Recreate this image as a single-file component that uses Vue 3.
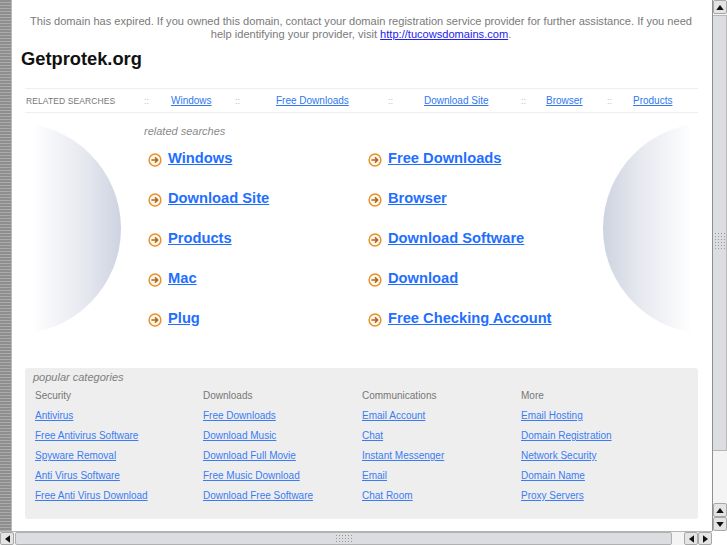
<script setup>
const barItems = [
  { label: 'Windows', w: 64, sep: 41 },
  { label: 'Free Downloads', w: 112, sep: 36 },
  { label: 'Download Site', w: 97, sep: 25 },
  { label: 'Browser', w: 61, sep: 26 },
  { label: 'Products', w: 60, sep: 0 },
]
const heroCols = [
  ['Windows', 'Download Site', 'Products', 'Mac', 'Plug'],
  ['Free Downloads', 'Browser', 'Download Software', 'Download', 'Free Checking Account'],
]
const categories = [
  { title: 'Security', links: ['Antivirus', 'Free Antivirus Software', 'Spyware Removal', 'Anti Virus Software', 'Free Anti Virus Download'] },
  { title: 'Downloads', links: ['Free Downloads', 'Download Music', 'Download Full Movie', 'Free Music Download', 'Download Free Software'] },
  { title: 'Communications', links: ['Email Account', 'Chat', 'Instant Messenger', 'Email', 'Chat Room'] },
  { title: 'More', links: ['Email Hosting', 'Domain Registration', 'Network Security', 'Domain Name', 'Proxy Servers'] },
]
</script>

<template>
  <div class="window">
    <div class="strip"></div>
    <main class="page">
      <p class="notice">
        This domain has expired. If you owned this domain, contact your domain registration service provider for further assistance. If you need help identifying your provider, visit
        <a href="#" class="notice-link">http://tucowsdomains.com</a>.
      </p>
      <h1 class="title">Getprotek.org</h1>

      <nav class="bar">
        <span class="bar-label">RELATED SEARCHES</span>
        <span class="sep first-sep">::</span>
        <template v-for="item in barItems" :key="item.label">
          <a href="#" class="bar-link" :style="{ width: item.w + 'px' }">{{ item.label }}</a>
          <span v-if="item.sep" class="sep" :style="{ width: item.sep + 'px' }">::</span>
        </template>
      </nav>

      <section class="hero">
        <svg class="orb" width="89" height="212" viewBox="0 0 89 212">
          <defs>
            <linearGradient id="orbL" gradientUnits="userSpaceOnUse" x1="0" x2="89" y1="0" y2="0">
              <stop offset="0" stop-color="#ffffff" />
              <stop offset="0.25" stop-color="#f4f5f8" />
              <stop offset="0.6" stop-color="#e6e8ef" />
              <stop offset="1" stop-color="#cdd3e0" />
            </linearGradient>
          </defs>
          <circle cx="-16.5" cy="105.5" r="105.5" fill="url(#orbL)" />
        </svg>
        <div class="hero-main">
          <div class="hero-heading">related searches</div>
          <div class="hero-cols">
            <ul v-for="(col, i) in heroCols" :key="i" class="hero-col">
              <li v-for="label in col" :key="label" class="hero-row">
                <svg class="go" width="14" height="14" viewBox="0 0 14 14">
                  <circle cx="7" cy="7" r="5.9" fill="#fff8ee" stroke="#e8922e" stroke-width="1.5" />
                  <path d="M3.4 7h6M7 4.4 9.6 7 7 9.6" fill="none" stroke="#b0661c" stroke-width="1.6" />
                </svg>
                <a href="#" class="hero-link">{{ label }}</a>
              </li>
            </ul>
          </div>
        </div>
        <svg class="orb" width="89" height="212" viewBox="0 0 89 212">
          <defs>
            <linearGradient id="orbR" gradientUnits="userSpaceOnUse" x1="0" x2="89" y1="0" y2="0">
              <stop offset="0" stop-color="#cdd3e0" />
              <stop offset="0.4" stop-color="#e6e8ef" />
              <stop offset="0.75" stop-color="#f4f5f8" />
              <stop offset="1" stop-color="#ffffff" />
            </linearGradient>
          </defs>
          <circle cx="105.5" cy="105.5" r="105.5" fill="url(#orbR)" />
        </svg>
      </section>

      <section class="panel">
        <div class="panel-heading">popular categories</div>
        <div class="panel-cols">
          <div v-for="cat in categories" :key="cat.title" class="panel-col">
            <div class="cat-title">{{ cat.title }}</div>
            <a v-for="l in cat.links" :key="l" href="#" class="cat-link">{{ l }}</a>
          </div>
        </div>
      </section>
    </main>

    <aside class="vbar">
      <button class="sb-btn v"><svg width="8" height="5" viewBox="0 0 9 6"><path d="M4.5 0 9 6H0z" /></svg></button>
      <div class="v-thumb"><span class="grip"></span></div>
      <div class="v-track"></div>
      <button class="sb-btn v"><svg width="8" height="5" viewBox="0 0 9 6"><path d="M4.5 0 9 6H0z" /></svg></button>
      <button class="sb-btn v"><svg width="8" height="5" viewBox="0 0 9 6"><path d="M0 0h9L4.5 6z" /></svg></button>
    </aside>

    <footer class="hbar">
      <button class="sb-btn h"><svg width="5" height="8" viewBox="0 0 6 9"><path d="M6 0v9L0 4.5z" /></svg></button>
      <div class="h-thumb"><span class="grip"></span></div>
      <div class="h-track"></div>
      <button class="sb-btn h"><svg width="5" height="8" viewBox="0 0 6 9"><path d="M6 0v9L0 4.5z" /></svg></button>
      <button class="sb-btn h"><svg width="5" height="8" viewBox="0 0 6 9"><path d="M0 0v9l6-4.5z" /></svg></button>
    </footer>
    <div class="corner"></div>
  </div>
</template>

<style scoped>
.window {
  width: 727px;
  height: 545px;
  display: grid;
  grid-template-columns: 12px 700px 15px;
  grid-template-rows: 531px 14px;
  overflow: hidden;
  background: #fff;
  font-family: "Liberation Sans", Arial, sans-serif;
}
.strip {
  background: repeating-linear-gradient(180deg, #8e8e8e 0 2px, #ababab 2px 3px);
  border-right: 1px solid #b8b8b8;
}
.page {
  overflow: hidden;
  padding-top: 15px;
}
.notice {
  margin: 0;
  padding: 0 20px 0 18px;
  text-align: center;
  font-size: 11.08px;
  line-height: 13px;
  color: #7a7a7a;
}
.notice-link { color: #2222ee; }
.title {
  margin: 7px 0 0 9px;
  font-size: 18.3px;
  line-height: 22px;
  font-weight: 700;
  color: #111;
}
.bar {
  margin: 18px 14px 0 13px;
  height: 25px;
  box-sizing: border-box;
  border-top: 1px solid #eeeeee;
  border-bottom: 1px solid #eeeeee;
  display: flex;
  align-items: center;
  padding-left: 1px;
  font-size: 10px;
}
.bar-label {
  width: 118px;
  font-size: 8.5px;
  letter-spacing: 0.1px;
  color: #777;
  white-space: nowrap;
}
.sep {
  color: #bbb;
  font-size: 9px;
  white-space: nowrap;
  flex: none;
}
.first-sep { width: 27px; }
.bar-link {
  flex: none;
  color: #2f78ee;
  white-space: nowrap;
}
.hero {
  display: flex;
  align-items: flex-start;
  margin: 10px 0 0 20px;
  height: 245px;
}
.orb { flex: none; }
.hero-main {
  flex: none;
  width: 482px;
  padding-left: 23px;
  box-sizing: border-box;
}
.hero-heading {
  font-size: 11px;
  font-style: italic;
  line-height: 13px;
  color: #8a8a8a;
  margin-top: 2px;
}
.hero-cols {
  display: flex;
}
.hero-col {
  list-style: none;
  margin: 0;
  padding: 0 0 0 4px;
  width: 220px;
  box-sizing: border-box;
}
.hero-row {
  height: 40px;
  display: flex;
  align-items: center;
  gap: 6px;
}
.hero-row .go { margin-top: 3px; flex: none; }
.hero-link {
  font-size: 14.7px;
  font-weight: 700;
  color: #1f6fff;
  white-space: nowrap;
}
.panel {
  margin: 0 14px 0 13px;
  height: 151px;
  background: #eeeeee;
  border-radius: 3px;
  padding: 3px 0 0 8px;
  box-sizing: border-box;
}
.panel-heading {
  font-size: 11px;
  font-style: italic;
  line-height: 13px;
  color: #808080;
}
.panel-cols {
  display: grid;
  grid-template-columns: 168px 159px 159px 1fr;
  margin: 2px 0 0 2px;
}
.panel-col { display: flex; flex-direction: column; align-items: flex-start; }
.cat-title {
  font-size: 10px;
  line-height: 20px;
  color: #777;
}
.cat-link {
  font-size: 10px;
  line-height: 20px;
  color: #3a7cf5;
  white-space: nowrap;
}

.vbar {
  grid-row: 1;
  grid-column: 3;
  display: flex;
  flex-direction: column;
  background: #f3f3f3;
  border-left: 1px solid #8f8f8f;
  box-sizing: border-box;
}
.hbar {
  grid-row: 2;
  grid-column: 1 / 3;
  display: flex;
  background: #f3f3f3;
  border-top: 1px solid #b5b5b5;
}
.sb-btn {
  padding: 0;
  margin: 0;
  flex: none;
  display: flex;
  align-items: center;
  justify-content: center;
  background: #e4e4e4;
  border: 1px solid #a8a8a8;
  border-radius: 2px;
}
.sb-btn svg { display: block; fill: #111; }
.sb-btn.v { width: 14px; height: 14px; }
.sb-btn.h { width: 14px; height: 13px; }
.v-thumb {
  flex: none;
  height: 436px;
  margin-top: 1px;
  background: #dcdde0;
  border: 1px solid #b8b8b8;
  border-width: 1px 1px 1px 0;
  box-sizing: border-box;
  display: flex;
  align-items: center;
  justify-content: center;
  padding-top: 14px;
}
.v-track {
  flex: 1;
  background: #f4f4f4;
}
.h-thumb {
  flex: none;
  width: 657px;
  margin-left: 1px;
  background: #dcdde0;
  border: 1px solid #b0b0b0;
  box-sizing: border-box;
  border-radius: 2px;
  display: flex;
  align-items: center;
  justify-content: center;
}
.h-track {
  flex: 1;
  background: #f4f4f4;
}
.grip {
  display: block;
  width: 17px;
  height: 17px;
  background: radial-gradient(circle, #9a9a9a 0 0.8px, transparent 1px) 0 0 / 3px 3px;
}
.h-thumb .grip { height: 10px; }
.v-thumb .grip { width: 11px; }
.corner {
  grid-row: 2;
  grid-column: 3;
  background: #fff;
}
a { text-decoration: underline; }
</style>

<style>
html, body { margin: 0; padding: 0; background: #fff; overflow: hidden; }
</style>
